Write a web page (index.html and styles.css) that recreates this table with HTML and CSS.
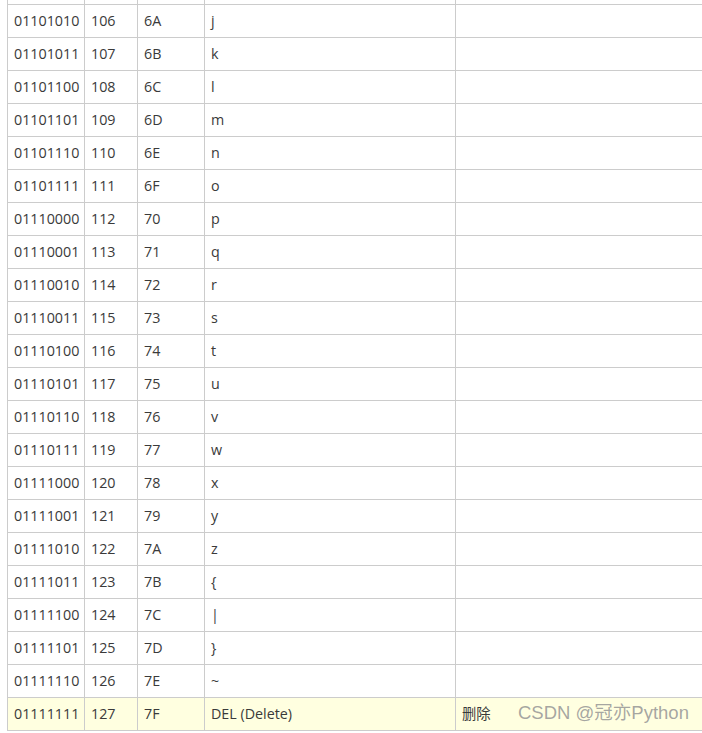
FILE: index.html
```html
<!DOCTYPE html>
<html>
<head>
<meta charset="utf-8">
<link rel="stylesheet" href="styles.css">
</head>
<body>
<div class="page">
<table class="ascii">
<colgroup><col class="c1"><col class="c2"><col class="c3"><col class="c4"><col class="c5"></colgroup>
<tbody>
<tr><td></td><td></td><td></td><td></td><td></td></tr>
<tr><td>01101010</td><td>106</td><td>6A</td><td>j</td><td></td></tr>
<tr><td>01101011</td><td>107</td><td>6B</td><td>k</td><td></td></tr>
<tr><td>01101100</td><td>108</td><td>6C</td><td>l</td><td></td></tr>
<tr><td>01101101</td><td>109</td><td>6D</td><td>m</td><td></td></tr>
<tr><td>01101110</td><td>110</td><td>6E</td><td>n</td><td></td></tr>
<tr><td>01101111</td><td>111</td><td>6F</td><td>o</td><td></td></tr>
<tr><td>01110000</td><td>112</td><td>70</td><td>p</td><td></td></tr>
<tr><td>01110001</td><td>113</td><td>71</td><td>q</td><td></td></tr>
<tr><td>01110010</td><td>114</td><td>72</td><td>r</td><td></td></tr>
<tr><td>01110011</td><td>115</td><td>73</td><td>s</td><td></td></tr>
<tr><td>01110100</td><td>116</td><td>74</td><td>t</td><td></td></tr>
<tr><td>01110101</td><td>117</td><td>75</td><td>u</td><td></td></tr>
<tr><td>01110110</td><td>118</td><td>76</td><td>v</td><td></td></tr>
<tr><td>01110111</td><td>119</td><td>77</td><td>w</td><td></td></tr>
<tr><td>01111000</td><td>120</td><td>78</td><td>x</td><td></td></tr>
<tr><td>01111001</td><td>121</td><td>79</td><td>y</td><td></td></tr>
<tr><td>01111010</td><td>122</td><td>7A</td><td>z</td><td></td></tr>
<tr><td>01111011</td><td>123</td><td>7B</td><td>{</td><td></td></tr>
<tr><td>01111100</td><td>124</td><td>7C</td><td>|</td><td></td></tr>
<tr><td>01111101</td><td>125</td><td>7D</td><td>}</td><td></td></tr>
<tr><td>01111110</td><td>126</td><td>7E</td><td>~</td><td></td></tr>
<tr class="hl"><td>01111111</td><td>127</td><td>7F</td><td>DEL (Delete)</td><td>删除</td></tr>
</tbody>
</table>
<div class="watermark">CSDN @冠亦Python</div>
</div>
</body>
</html>
```
FILE: styles.css
```css
html, body {
  margin: 0;
  padding: 0;
  background: #fff;
  overflow: hidden;
}
.page {
  position: relative;
  width: 702px;
  height: 733px;
  overflow: hidden;
  padding-left: 7px;
  box-sizing: border-box;
}
.ascii {
  border-collapse: collapse;
  table-layout: fixed;
  width: 760px;
  margin-top: -29px;
  font-family: "Open Sans", "Noto Sans CJK SC", sans-serif;
  font-size: 14.3px;
  color: #3a3a3a;
}
.c1 { width: 77px; }
.c2 { width: 53px; }
.c3 { width: 67px; }
.c4 { width: 251px; }
.c5 { width: 312px; }
.ascii td {
  border: 1px solid #cccccc;
  height: 33px;
  padding: 0 6px;
  line-height: 20px;
  vertical-align: middle;
  white-space: nowrap;
  box-sizing: border-box;
}
.ascii tr.hl td {
  background: #ffffe0;
}
.watermark {
  position: absolute;
  left: 518px;
  top: 701px;
  font-family: "Liberation Sans", "Noto Sans CJK SC", sans-serif;
  font-size: 18.5px;
  line-height: 24px;
  color: rgba(150, 150, 150, 0.85);
  white-space: nowrap;
}
```
